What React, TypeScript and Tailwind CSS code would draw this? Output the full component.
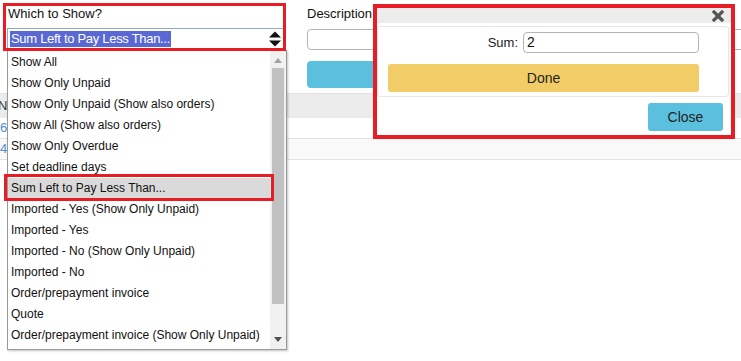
import React from "react";

const items = [
  "Show All",
  "Show Only Unpaid",
  "Show Only Unpaid (Show also orders)",
  "Show All (Show also orders)",
  "Show Only Overdue",
  "Set deadline days",
  "Sum Left to Pay Less Than...",
  "Imported - Yes (Show Only Unpaid)",
  "Imported - Yes",
  "Imported - No (Show Only Unpaid)",
  "Imported - No",
  "Order/prepayment invoice",
  "Quote",
  "Order/prepayment invoice (Show Only Unpaid)",
];

export default function App() {
  return (
    <div className="relative w-[741px] h-[361px] overflow-hidden bg-white font-['Liberation_Sans',Arial,sans-serif] text-[#222]">
      {/* Background page */}
      <div className="flex pt-[4px]">
        <div className="w-[307px] shrink-0 pl-[7px]">
          <div className="h-[20px] leading-[20px] text-[13px] pl-px text-[#111]">Which to Show?</div>
          <div className="mt-[4px] h-[22px] w-[278px] border border-[#8fa8d0] bg-white flex items-center pl-[2px] pr-[2px]">
            <span className="bg-[#5a68d4] text-white text-[13px] leading-[16px] tracking-[-0.3px] px-px">
              Sum Left to Pay Less Than...
            </span>
            <div className="flex-1" />
            <svg width="12" height="16" viewBox="0 0 12 16" className="mr-[1px]">
              <polygon points="0,6.5 12,6.5 6,0.5" fill="#111" />
              <polygon points="0,9.5 12,9.5 6,15.5" fill="#111" />
            </svg>
          </div>
        </div>
        <div className="flex-1 min-w-0">
          <div className="h-[20px] leading-[20px] text-[13px] text-[#111]">Description</div>
          <div className="mt-[5px] h-[21px] border border-[#b4b3c6] rounded-[4px] bg-white w-[460px]" />
          <div className="mt-[11px] h-[27px] w-[200px] rounded-[4px] bg-[#5bc0de]" />
        </div>
      </div>
      <div className="mt-[5px]">
        <div className="h-[25px] bg-[#ececec] border-t border-[#e2e2e2] flex items-center text-[13px]">
          <span className="ml-[-2px] text-[#333]">No</span>
        </div>
        <div className="h-[21px] border-b border-[#e3e3e3] flex items-center text-[13px] text-[#4a8fcf]">
          <span>6</span>
        </div>
        <div className="h-[21px] bg-[#f9f9f9] border-b border-[#e3e3e3] flex items-center text-[13px] text-[#4a8fcf]">
          <span>4</span>
        </div>
      </div>

      {/* Dropdown list */}
      <div className="absolute left-[7px] top-[50px] w-[280px] h-[300px] bg-white border border-[#9a9a9a] shadow-[1px_1px_2px_rgba(0,0,0,0.25)] flex">
        <div className="flex-1 flex flex-col pt-[1px]">
          {items.map((t, i) => (
            <div
              key={t}
              className={`h-[21px] leading-[21px] pl-[3px] text-[12px] text-[#111] whitespace-nowrap ${
                i === 6 ? "bg-[#dadada]" : ""
              }`}
            >
              {t}
            </div>
          ))}
        </div>
        <div className="w-[16px] bg-[#f1f1f1] flex flex-col items-center">
          <svg width="8" height="5" viewBox="0 0 8 5" className="mt-[7px]">
            <polygon points="0,5 8,5 4,0" fill="#a3a3a3" />
          </svg>
          <div className="mt-[5px] w-[12px] h-[236px] bg-[#c1c1c1]" />
          <div className="flex-1" />
          <svg width="8" height="5" viewBox="0 0 8 5" className="mb-[7px]">
            <polygon points="0,0 8,0 4,5" fill="#505050" />
          </svg>
        </div>
      </div>

      {/* Red highlight boxes */}
      <div className="absolute left-[3px] top-[3px] w-[283px] h-[48px] border-[3px] border-[#e81c23]" />
      <div className="absolute left-[4px] top-[174px] w-[270px] h-[27px] border-[3px] border-[#e81c23]" />

      {/* Modal */}
      <div className="absolute left-[373px] top-[4px] w-[362px] h-[135px] border-[4px] border-[#e81c23] bg-white flex flex-col">
        <div className="h-[15px] bg-[#ececec] flex items-center justify-end pr-[7px]">
          <svg width="12" height="12" viewBox="0 0 12 12">
            <path d="M2 2 L10 10 M10 2 L2 10" stroke="#555" strokeWidth="3.2" strokeLinecap="square" />
          </svg>
        </div>
        <div className="mt-[3px] mr-[2px] h-[71px] border border-[#e6e6e6] rounded-[3px] pl-[10px] pr-[29px] pt-[5px]">
          <div className="flex items-center justify-end gap-[5px]">
            <span className="text-[13px] text-[#222]">Sum:</span>
            <div className="w-[176px] h-[21px] border border-[#b4b3c6] rounded-[4px] flex items-center pl-[3px] text-[14px] text-[#111]">
              2
            </div>
          </div>
          <div className="mt-[11px] h-[28px] bg-[#f2cc66] rounded-[3px] flex items-center justify-center text-[14px] text-[#222]">
            Done
          </div>
        </div>
        <div className="flex justify-end pr-[8px] mt-[6px]">
          <div className="w-[75px] h-[28px] bg-[#5bc0de] rounded-[3px] flex items-center justify-center text-[14px] text-[#222]">
            Close
          </div>
        </div>
      </div>
    </div>
  );
}
